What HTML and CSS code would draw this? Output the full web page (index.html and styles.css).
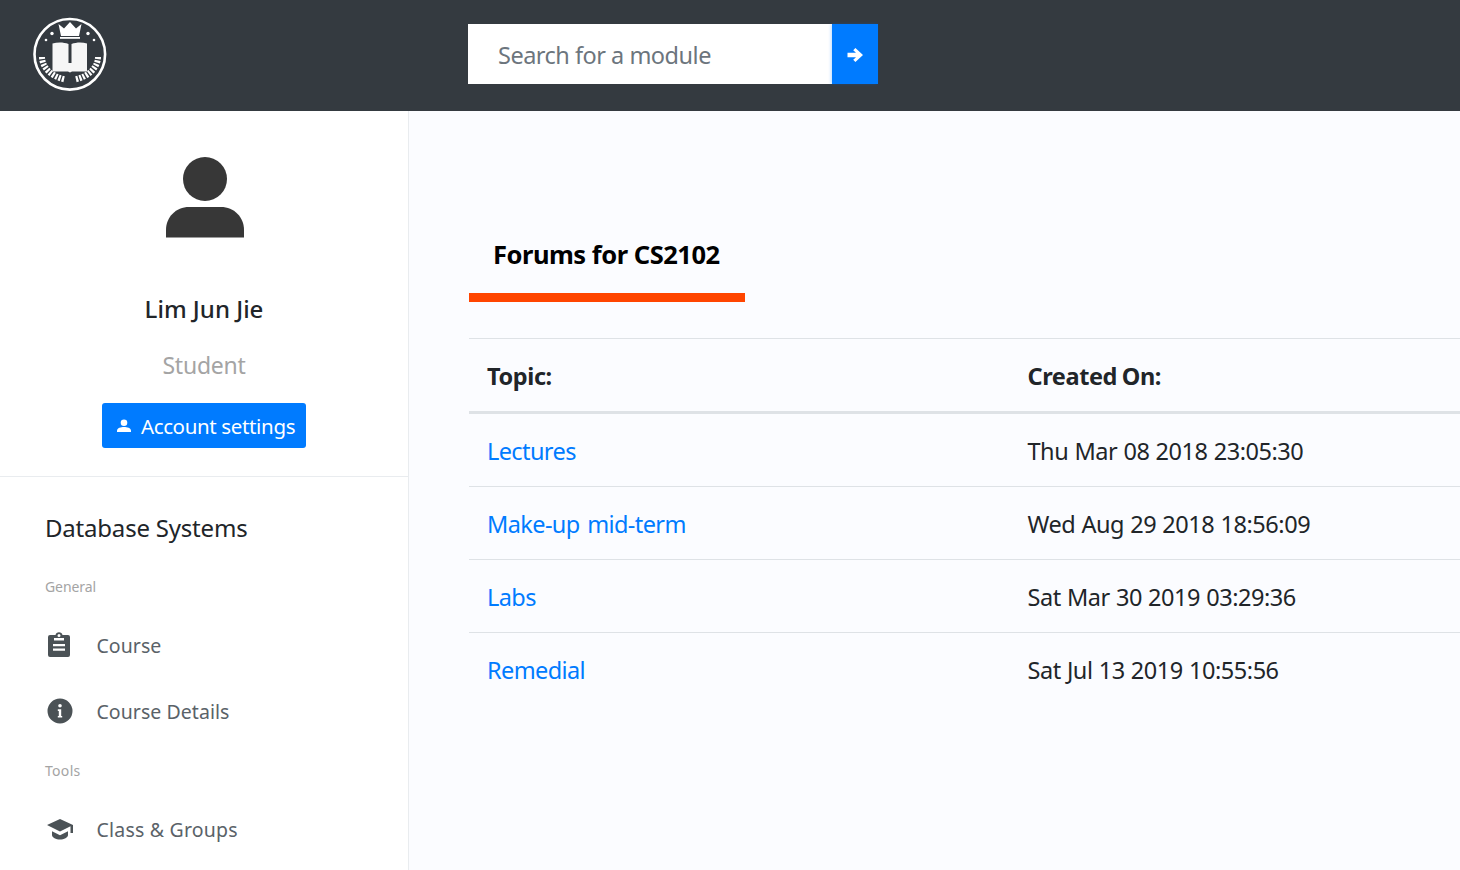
FILE: index.html
```html
<!DOCTYPE html>
<html lang="en">
<head>
<meta charset="utf-8">
<title>Forums for CS2102</title>
<link rel="stylesheet" href="styles.css">
</head>
<body>
<header class="topbar">
  <svg class="logo" viewBox="0 0 74 74" width="74" height="74">
    <circle cx="36.800" cy="37.300" r="35.300" fill="none" stroke="#fff" stroke-width="2.600"/>
    <path d="M25.500 7l5.500 4.500L37 5l6 6.500L48.500 7 46 19H28z" fill="#fff"/>
    <rect x="27" y="20" width="20" height="1.800" fill="#fff"/>
    <circle cx="19" cy="16.500" r="1.700" fill="#fff"/><circle cx="55" cy="16.500" r="1.700" fill="#fff"/>
    <circle cx="13" cy="23" r="1.300" fill="#fff"/><circle cx="61" cy="23" r="1.300" fill="#fff"/>
    <path d="M19.500 26.500c5-1.500 11-1.500 16 .5v19h3V27c5-2 11-2 15.500-.5V54.500H39l-2 1-2-1H19.500z" fill="#f6f6f6"/>
    <path d="M9 40C9 50 18 59.500 32 62.500" fill="none" stroke="#fff" stroke-width="6" stroke-dasharray="2.200 1.300"/>
    <path d="M65 40C65 50 56 59.500 42 62.500" fill="none" stroke="#fff" stroke-width="6" stroke-dasharray="2.200 1.300"/>
  </svg>
  <form class="search">
    <input class="search-input" type="text" placeholder="Search for a module">
    <button class="search-btn" type="button" aria-label="Search">
      <svg viewBox="0 0 16 16" width="16" height="16"><path d="M8.400 1L16 8l-7.600 7-2.200-2.200L9 10.200H.5V5.800H9L6.200 3.200z" fill="#fff"/></svg>
    </button>
  </form>
</header>
<div class="layout">
  <aside class="sidebar">
    <section class="profile">
      <svg class="avatar" viewBox="0 0 78 82" width="78" height="82"><circle cx="39" cy="22" r="22" fill="#373737"/><path d="M0 80.500V73c0-13 10-23 23-23h32c13 0 23 10 23 23v7.500z" fill="#373737"/></svg>
      <div class="name">Lim Jun Jie</div>
      <div class="role">Student</div>
      <a class="account-btn" href="#">
        <svg viewBox="0 0 16 16" width="16" height="16"><circle cx="8" cy="4.700" r="3.300" fill="#fff"/><path d="M1 14v-1.500C1 10 5 9 8 9s7 1 7 3.500V14z" fill="#fff"/></svg>
        <span>Account settings</span>
      </a>
    </section>
    <nav class="menu">
      <h2 class="module-title">Database Systems</h2>
      <div class="menu-label">General</div>
      <a class="menu-item" href="#">
        <span class="menu-icon"><svg viewBox="0 0 24 26" width="24" height="26"><path fill-rule="evenodd" d="M3 3h5.500a3.600 3.600 0 0 1 7 0H21a2 2 0 0 1 2 2v18a2 2 0 0 1-2 2H3a2 2 0 0 1-2-2V5a2 2 0 0 1 2-2zM12 2a1.500 1.500 0 1 0 0 3 1.500 1.500 0 0 0 0-3zM7 6v2.500h10V6zM6 12v2.200h12V12zM6 16.500v2.200h12v-2.200z" fill="#4b5256"/></svg></span>
        <span>Course</span>
      </a>
      <a class="menu-item" href="#">
        <span class="menu-icon"><svg viewBox="0 0 26 26" width="26" height="26"><path fill-rule="evenodd" d="M13 .5a12.500 12.500 0 1 1 0 25 12.500 12.500 0 0 1 0-25zM13 6a1.800 1.800 0 1 0 0 3.600A1.800 1.800 0 0 0 13 6zM10.800 11.200v1.700h1v5H10.800v1.700h4.400v-1.700h-1v-6.700z" fill="#4b5256"/></svg></span>
        <span>Course Details</span>
      </a>
      <div class="menu-label tools">Tools</div>
      <a class="menu-item menu-item-last" href="#">
        <span class="menu-icon"><svg class="cap-icon" viewBox="0 0 28 22" width="28" height="22"><path d="M14 1L1 7l13 6.500L24.500 8.300V15h2.500V7z" fill="#4b5256"/><path d="M6 13.200V17c0 2.500 4 4.500 8 4.500s8-2 8-4.500v-3.800l-8 4z" fill="#4b5256"/></svg></span>
        <span>Class &amp; Groups</span>
      </a>
    </nav>
  </aside>
  <main class="content">
    <h1 class="tab">Forums for CS2102</h1>
    <table class="forums">
      <thead>
        <tr><th class="col-topic">Topic:</th><th>Created On:</th></tr>
      </thead>
      <tbody>
        <tr><td><a href="#">Lectures</a></td><td>Thu Mar 08 2018 23:05:30</td></tr>
        <tr><td><a href="#">Make-up mid-term</a></td><td>Wed Aug 29 2018 18:56:09</td></tr>
        <tr><td><a href="#">Labs</a></td><td>Sat Mar 30 2019 03:29:36</td></tr>
        <tr><td><a href="#">Remedial</a></td><td>Sat Jul 13 2019 10:55:56</td></tr>
      </tbody>
    </table>
  </main>
</div>
</body>
</html>
```
FILE: styles.css
```css
* { box-sizing: border-box; }
html, body { margin: 0; height: 100%; overflow: hidden; }
body { font-family: "Noto Sans", "Open Sans", sans-serif; color: #212529; background: #fff; }
a { text-decoration: none; }

.topbar { height: 111px; background: #343a40; display: flex; align-items: flex-start; padding: 17px 0 0 33px; }
.logo { flex: none; }
.search { display: flex; margin: 7px 0 0 361px; }
.search-input { width: 364px; height: 60px; border: 0; padding: 2px 30px 0; font: 23.500px "Noto Sans", sans-serif; letter-spacing: -.5px; color: #495057; background: #fff; outline: 0; border-radius: 0; }
.search-input::placeholder { color: #6c757d; opacity: 1; }
.search-btn { width: 46px; height: 60px; border: 0; padding: 2px 0 0; background: #007bff; display: flex; align-items: center; justify-content: center; box-shadow: -1px 0 3px rgba(0, 123, 255, .25); }

.layout { display: flex; height: 759px; }
.sidebar { width: 409px; flex: none; background: #fff; border-right: 1px solid #e9ecef; }
.profile { height: 366px; border-bottom: 1px solid #e9ecef; display: flex; flex-direction: column; align-items: center; padding-top: 46px; }
.avatar { flex: none; margin-left: 2px; }
.name { margin-top: 52px; font-size: 24px; line-height: 36px; font-weight: 500; color: #212529; }
.role { margin-top: 20px; font-size: 23px; line-height: 36px; letter-spacing: -.25px; color: #a4a4a4; }
.account-btn { margin-top: 20px; width: 204px; height: 45px; padding-left: 3px; background: #007bff; color: #fff; border-radius: 3px; display: flex; align-items: center; justify-content: center; gap: 9px; font-size: 20.500px; letter-spacing: -.35px; }

.menu { padding: 0 0 0 45px; }
.module-title { margin: 32px 0 0; font-size: 24px; line-height: 38px; font-weight: 400; letter-spacing: -.2px; color: #212529; }
.menu-label { margin-top: 29px; font-size: 14px; line-height: 21px; color: #a4a4a4; letter-spacing: -.1px; }
.menu-label.tools { margin-top: 16px; letter-spacing: .3px; }
.menu-item { display: flex; align-items: center; height: 66px; color: #5a6268; font-size: 19.500px; letter-spacing: .05px; }
.menu-label + .menu-item { margin-top: 15px; }
.menu-item-last { letter-spacing: .2px; }
.menu-icon { width: 51.500px; flex: none; display: flex; align-items: center; padding-left: 2px; }
.cap-icon { margin-left: -1px; }

.content { flex: 1; min-width: 0; background: #fbfcff; padding: 112px 0 0 60px; overflow: hidden; }
.tab { margin: 0; width: 276px; height: 79px; padding: 13px 0 0 24px; border-bottom: 9px solid #ff4500; font-size: 25.500px; line-height: 36px; font-weight: 700; letter-spacing: -.48px; color: #000; white-space: nowrap; }
.forums { margin-top: 36px; width: 1080.500px; border-collapse: collapse; table-layout: fixed; font-size: 23.500px; line-height: 36px; letter-spacing: -.45px; word-spacing: .5px; }
.forums th, .forums td { text-align: left; border-top: 1px solid #dee2e6; }
.forums th { padding: 19px 18px 17px; font-weight: 700; border-bottom: 3px solid #dee2e6; letter-spacing: -.4px; word-spacing: -1px; }
.forums td { padding: 19px 18px 17px; }
.forums tbody tr:first-child td { border-top: 0; }
.col-topic { width: 540.500px; }
.forums a { color: #007bff; letter-spacing: -.6px; word-spacing: 2px; }
```
